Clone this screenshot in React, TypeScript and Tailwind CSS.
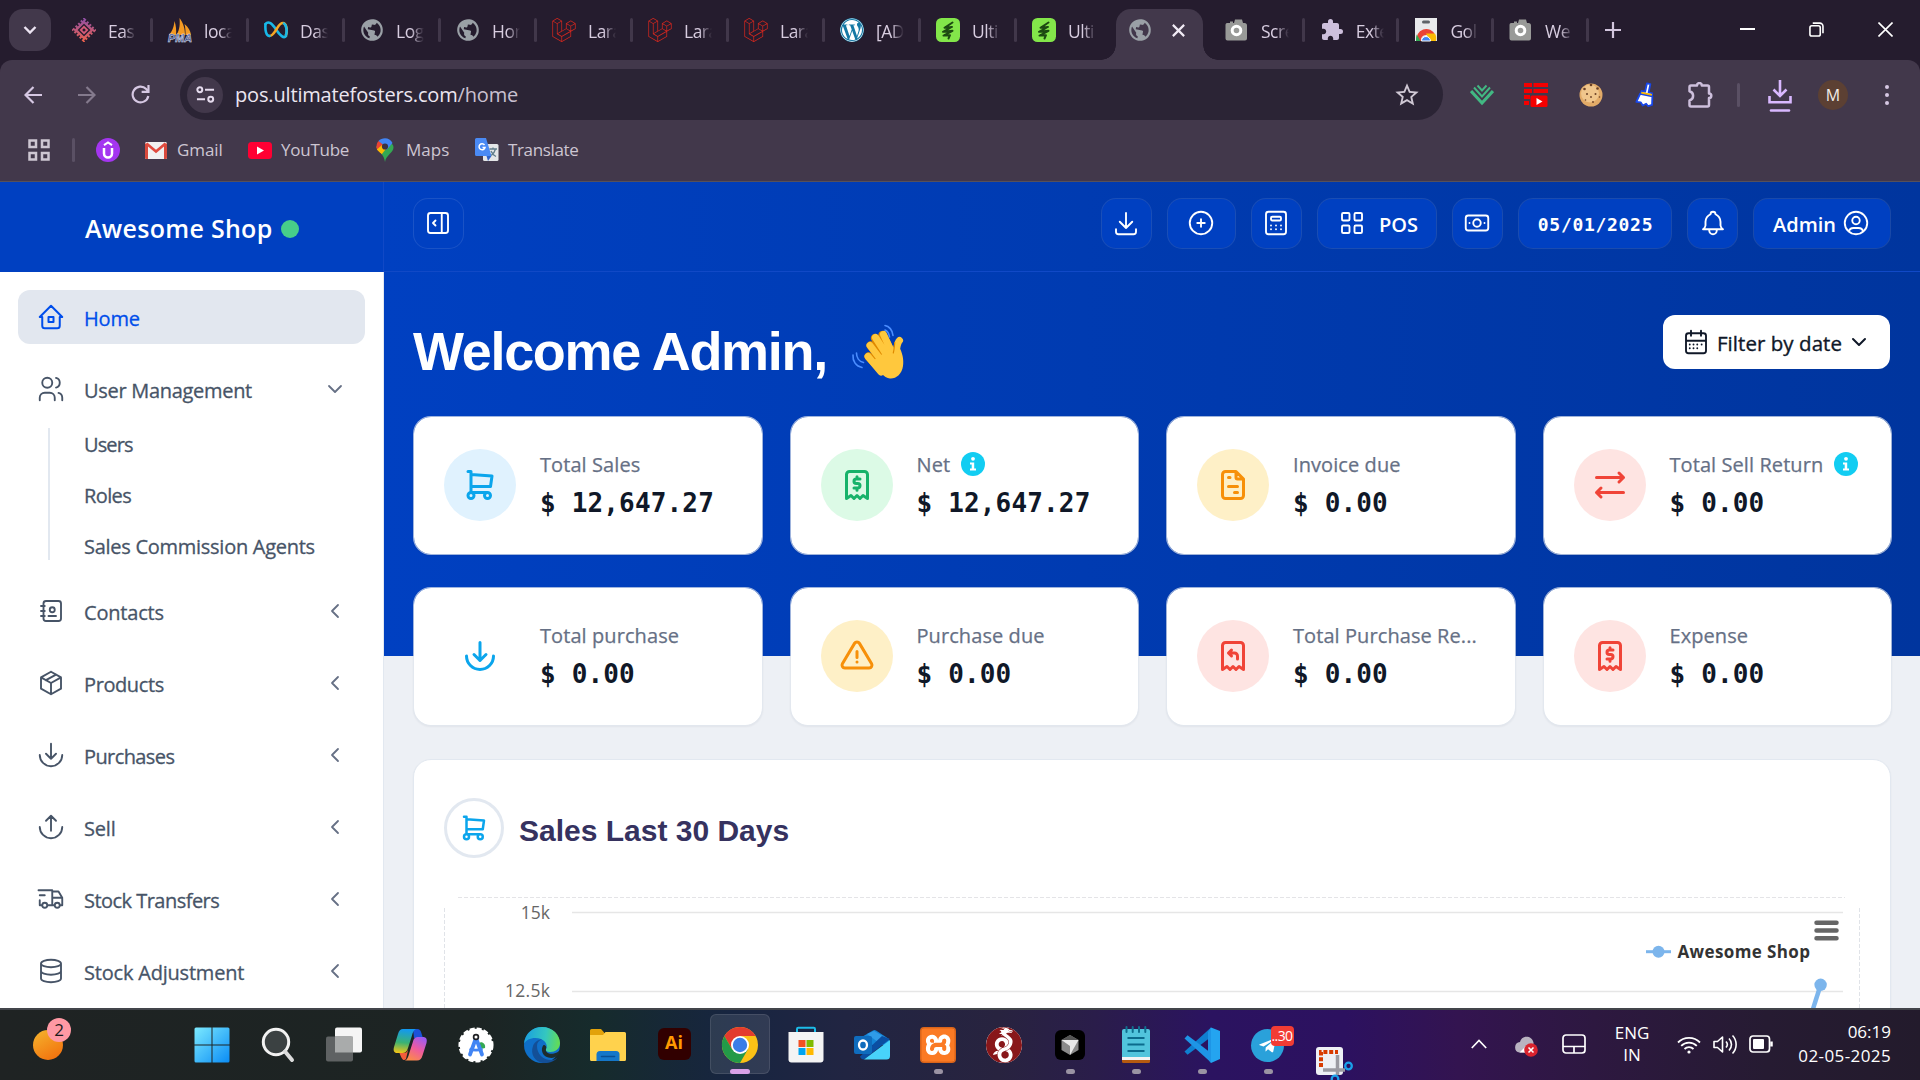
import React from "react";
import { FaLaravel, FaWordpress, FaTelegramPlane } from "react-icons/fa";
import { MdPublic, MdExtension, MdStarOutline } from "react-icons/md";
import { SiXampp, SiWireguard } from "react-icons/si";

const ICONS = {
  home: "M5 12H3l9-9 9 9h-2M5 12v7a2 2 0 0 0 2 2h10a2 2 0 0 0 2-2v-7M10 12h4v4h-4z",
  users:
    "M5 7a4 4 0 1 0 8 0a4 4 0 1 0-8 0M3 21v-2a4 4 0 0 1 4-4h4a4 4 0 0 1 4 4v2M16 3.13a4 4 0 0 1 0 7.75M21 21v-2a4 4 0 0 0-3-3.85",
  contacts:
    "M20 6v12a2 2 0 0 1-2 2H8a2 2 0 0 1-2-2V6a2 2 0 0 1 2-2h10a2 2 0 0 1 2 2zM10 16h6M11 11a2 2 0 1 0 4 0a2 2 0 1 0-4 0M4 8h3M4 12h3M4 16h3",
  box: "M12 3l8 4.5v9L12 21l-8-4.5v-9L12 3M12 12l8-4.5M12 12v9M12 12L4 7.5M16 5.25l-8 4.5",
  purchases: "M12 3v12M16 11l-4 4l-4-4M3 12a9 9 0 0 0 18 0",
  sell: "M12 15V3M16 7l-4-4l-4 4M3 12a9 9 0 0 0 18 0",
  truck:
    "M5 17a2 2 0 1 0 4 0a2 2 0 1 0-4 0M15 17a2 2 0 1 0 4 0a2 2 0 1 0-4 0M5 17H3v-4M2 5h11v12M9 17h6M19 17h2v-6h-8M13 6h5l3 5M3 9h4",
  database:
    "M4 6a8 3 0 1 0 16 0a8 3 0 1 0-16 0M4 6v6a8 3 0 0 0 16 0V6M4 12v6a8 3 0 0 0 16 0v-6",
  chevronLeft: "M15 6l-6 6l6 6",
  chevronDown: "M6 9l6 6l6-6",
  panel: "M4 6a2 2 0 0 1 2-2h12a2 2 0 0 1 2 2v12a2 2 0 0 1-2 2H6a2 2 0 0 1-2-2zM15 4v16M10 10l-2 2l2 2",
  download: "M4 17v2a2 2 0 0 0 2 2h12a2 2 0 0 0 2-2v-2M7 11l5 5l5-5M12 4v12",
  plus: "M3 12a9 9 0 1 0 18 0a9 9 0 0 0-18 0M9 12h6M12 9v6",
  calculator:
    "M4 5a2 2 0 0 1 2-2h12a2 2 0 0 1 2 2v14a2 2 0 0 1-2 2H6a2 2 0 0 1-2-2zM8 8a1 1 0 0 1 1-1h6a1 1 0 0 1 1 1v1a1 1 0 0 1-1 1H9a1 1 0 0 1-1-1zM8 14v.01M12 14v.01M16 14v.01M8 17v.01M12 17v.01M16 17v.01",
  grid: "M4 5a1 1 0 0 1 1-1h4a1 1 0 0 1 1 1v4a1 1 0 0 1-1 1H5a1 1 0 0 1-1-1zM14 5a1 1 0 0 1 1-1h4a1 1 0 0 1 1 1v4a1 1 0 0 1-1 1h-4a1 1 0 0 1-1-1zM4 15a1 1 0 0 1 1-1h4a1 1 0 0 1 1 1v4a1 1 0 0 1-1 1H5a1 1 0 0 1-1-1zM14 15a1 1 0 0 1 1-1h4a1 1 0 0 1 1 1v4a1 1 0 0 1-1 1h-4a1 1 0 0 1-1-1z",
  cash: "M9 12a3 3 0 1 0 6 0a3 3 0 1 0-6 0M3 8a2 2 0 0 1 2-2h14a2 2 0 0 1 2 2v8a2 2 0 0 1-2 2H5a2 2 0 0 1-2-2zM18 12h.01M6 12h.01",
  bell: "M10 5a2 2 0 1 1 4 0a7 7 0 0 1 4 6v3a4 4 0 0 0 2 3H4a4 4 0 0 0 2-3v-3a7 7 0 0 1 4-6M9 17v1a3 3 0 0 0 6 0v-1",
  user: "M3 12a9 9 0 1 0 18 0a9 9 0 1 0-18 0M9 10a3 3 0 1 0 6 0a3 3 0 1 0-6 0M6.17 18.85A4 4 0 0 1 10 16h4a4 4 0 0 1 3.83 2.855",
  calendar:
    "M4 7a2 2 0 0 1 2-2h12a2 2 0 0 1 2 2v12a2 2 0 0 1-2 2H6a2 2 0 0 1-2-2zM16 3v4M8 3v4M4 11h16M7 14h.01M10 14h.01M13 14h.01M16.5 14h.01M13 17h.01M7 17h.01M10 17h.01",
  cart: "M4 19a2 2 0 1 0 4 0a2 2 0 1 0-4 0M15 19a2 2 0 1 0 4 0a2 2 0 1 0-4 0M17 17H6V3H4M6 5l14 1l-1 7H6",
  receipt:
    "M5 21V5a2 2 0 0 1 2-2h10a2 2 0 0 1 2 2v16l-3-2l-2 2l-2-2l-2 2l-2-2l-3 2M14 8h-2.5a1.5 1.5 0 0 0 0 3h1a1.5 1.5 0 0 1 0 3H10M12 14v1.5M12 6.5V8",
  refund:
    "M5 21V5a2 2 0 0 1 2-2h10a2 2 0 0 1 2 2v16l-3-2l-2 2l-2-2l-2 2l-2-2l-3 2M15 14v-2a2 2 0 0 0-2-2H9l2-2M11 12l-2-2",
  invoice:
    "M14 3v4a1 1 0 0 0 1 1h4M17 21H7a2 2 0 0 1-2-2V5a2 2 0 0 1 2-2h7l5 5v11a2 2 0 0 1-2 2zM9 7h1M9 13h6M13 17h2",
  exchange: "M21 7H3M18 10l3-3l-3-3M6 20l-3-3l3-3M3 17h18",
  alert:
    "M12 9v4M10.363 3.591L2.257 17.125a1.914 1.914 0 0 0 1.636 2.871h16.214a1.914 1.914 0 0 0 1.636-2.87L13.637 3.59a1.914 1.914 0 0 0-3.274 0zM12 16h.01",
} as const;
type IconName = keyof typeof ICONS;

function Icon({ name, className, stroke = 1.5 }: { name: IconName; className?: string; stroke?: number }) {
  return (
    <svg viewBox="0 0 24 24" fill="none" stroke="currentColor" strokeWidth={stroke} strokeLinecap="round" strokeLinejoin="round" className={className}>
      <path d={ICONS[name]} />
    </svg>
  );
}

/* ---------- favicons ---------- */

const Globe = () => <MdPublic className="size-[26px] -mx-px rotate-[10deg] text-[#9aa0a6]" />;
const Laravel = () => <FaLaravel className="size-6 text-[#d1271f]" />;
const Camera = () => (
  <svg viewBox="0 0 24 24" className="size-6">
    <path d="M3 5h2V3.500h3V5h1l1-3.500h7L18 5h1.500A2.500 2.500 0 0 1 22 7.500v13a2 2 0 0 1-2 2H2.500a2 2 0 0 1-2-2V7A2 2 0 0 1 3 5z" fill="#999a98" />
    <circle cx="11.500" cy="12.500" r="4.300" fill="none" stroke="#fff" strokeWidth="3" />
  </svg>
);
const Ultimate = () => (
  <svg viewBox="0 0 24 24" className="size-6">
    <rect width="24" height="24" rx="5.500" fill="#83e64a" />
    <path d="M16.500 4.500L8.500 9.800l7.500-.9L7 13.800l9.500-1L7.500 17.600l6.500-.4-1.500 3.300" fill="none" stroke="#1d4a12" strokeWidth="2" strokeLinecap="round" strokeLinejoin="round" />
  </svg>
);
const Easy = () => (
  <svg viewBox="0 0 24 24" className="size-6" fill="none">
    <defs>
      <linearGradient id="easy" gradientUnits="userSpaceOnUse" x1="0" y1="0" x2="0" y2="24">
        <stop offset="0" stopColor="#8f4fa8" />
        <stop offset="1" stopColor="#f0614a" />
      </linearGradient>
    </defs>
    <path d="M12 1.500L22.500 12 12 22.500 1.500 12z" stroke="url(#easy)" strokeWidth="3" strokeDasharray="2 1.700" />
    <path d="M12 4L20 12 12 20 4 12z" stroke="url(#easy)" strokeWidth="2.400" />
    <path d="M12 8.800l3.200 3.200-3.200 3.200L8.800 12z" stroke="#d65a78" strokeWidth="1.800" />
  </svg>
);
const Pma = () => (
  <svg viewBox="0 0 24 24" className="size-6 overflow-visible">
    <path d="M1 17C5 12 6 8 6.500 3 8 8 8.500 12 8 17zM8.500 17C12 11 12 6 11.500 0c4 5 5.500 11 5.500 17zM17.500 17c0-4 0-7-1-11 4 3 6 7 6.500 11z" fill="#f59b23" />
    <text x="0" y="23.500" fontSize="10" fontWeight="800" fontStyle="italic" textLength="24" lengthAdjust="spacingAndGlyphs" fill="#3a4580" stroke="#dfe3f7" strokeWidth=".5" className="font-['Liberation_Sans']">PMA</text>
  </svg>
);
const Loop = () => (
  <svg viewBox="0 0 24 24" className="size-6" fill="none" strokeWidth="2.600" strokeLinecap="round">
    <path d="M1.500 6c3-3.500 6.500-.5 10.500 5.500S20 21 22 18" stroke="#18b8e8" />
    <path d="M22 17c2-5 0-12-3-12-3.500 0-5 4-7 7s-3.500 6-6.500 6" stroke="#f5a623" />
    <path d="M5.500 18C2 18 1 12 1.500 6M22 17c1.300-4 .3-10-2-11.500" stroke="#18b8e8" />
  </svg>
);
const WebStore = () => (
  <svg viewBox="0 0 24 24" className="size-6">
    <path d="M1 0h22v23H1z" fill="#e9eaec" />
    <rect x="8" y="2.500" width="8" height="3" rx="1.500" fill="#5f6368" />
    <path d="M3 23a9.500 9.500 0 0 1 18-6H12a5 5 0 0 0-5 6z" fill="#ea4335" />
    <path d="M2.800 16.500L6.500 23H2c0-2.500 0-4.500.8-6.500z" fill="#34a853" />
    <path d="M12 15.500h9c1.200 2 1.600 5 1 7.500h-6z" fill="#fbbc05" />
    <path d="M7.500 23a4.500 4.500 0 1 1 9 0z" fill="#4285f4" stroke="#fff" />
  </svg>
);

type Tab = { label: string; icon: React.ReactNode; last?: boolean };
const TABS: Tab[] = [
  { label: "Eas", icon: <Easy /> },
  { label: "loca", icon: <Pma /> },
  { label: "Das", icon: <Loop /> },
  { label: "Log", icon: <Globe /> },
  { label: "Hon", icon: <Globe /> },
  { label: "Lara", icon: <Laravel /> },
  { label: "Lara", icon: <Laravel /> },
  { label: "Lara", icon: <Laravel /> },
  { label: "[AD", icon: <FaWordpress className="size-6 rounded-full bg-[#1478a4] text-white" /> },
  { label: "Ulti", icon: <Ultimate /> },
  { label: "Ulti", icon: <Ultimate />, last: true },
];
const TABS_AFTER: Tab[] = [
  { label: "Scre", icon: <Camera /> },
  { label: "Exte", icon: <MdExtension className="size-6 text-[#cdbfdc]" /> },
  { label: "Gol", icon: <WebStore /> },
  { label: "We", icon: <Camera /> },
];

function TabCell({ tab, wide }: { tab: Tab; wide?: boolean }) {
  return (
    <div className={"flex h-full shrink-0 items-center " + (wide ? "w-24" : "w-[94.700px]")}>
      <span className="ml-[15px] flex size-6 shrink-0 items-center justify-center">{tab.icon}</span>
      <span className="ml-3 w-[36px] shrink-0 whitespace-nowrap pt-[3px] text-[17.500px] tracking-[-0.500px] text-[#d8cde0] [mask-image:linear-gradient(to_right,#000_15px,transparent_28px)]">
        {tab.label}
      </span>
      <span className={"ml-auto h-6 w-[3px] rounded-full " + (tab.last ? "bg-transparent" : "bg-[#41374a]")} />
    </div>
  );
}

function TabStrip() {
  return (
    <div className="flex h-[60px] bg-[#251c2e]">
      <div className="ml-[9px] mt-[9px] flex h-[42px] w-[42px] shrink-0 items-center justify-center rounded-[14px] bg-[#42384b]">
        <svg viewBox="0 0 14 10" className="mb-px w-3.5" fill="none" stroke="#ece4f2" strokeWidth="2.400">
          <path d="M1.500 2L7 7.500 12.500 2" />
        </svg>
      </div>
      <div className="flex h-[60px] pl-1.5">
        {TABS.map((t, i) => (
          <TabCell key={i} tab={t} wide />
        ))}
      </div>
      <div className="relative ml-[3px] mt-[9px] flex h-[51px] w-[87px] shrink-0 items-center rounded-t-[15px] bg-[#42384b] pb-[9px]">
        <span className="absolute bottom-0 -left-[15px] size-[15px] bg-[radial-gradient(circle_at_0_0,transparent_14.500px,#42384b_15px)]" />
        <span className="absolute bottom-0 -right-[15px] size-[15px] bg-[radial-gradient(circle_at_100%_0,transparent_14.500px,#42384b_15px)]" />
        <span className="ml-3"><Globe /></span>
        <svg viewBox="0 0 12 12" className="ml-5 w-[13px]" stroke="#f1ebf5" strokeWidth="2">
          <path d="M.8.800l10.400 10.400M11.200.800L.8 11.200" />
        </svg>
      </div>
      <div className="ml-[7px] flex h-[60px]">
        {TABS_AFTER.map((t, i) => (
          <TabCell key={i} tab={t} />
        ))}
      </div>
      <svg viewBox="0 0 16 16" className="ml-4 mt-[22px] size-4" stroke="#d3c6de" strokeWidth="2.200">
        <path d="M8 0v16M0 8h16" />
      </svg>
      <div className="ml-auto mr-[27px] flex items-center gap-[54px] pb-0.5 text-white">
        <span className="h-0.5 w-[15px] bg-white" />
        <svg viewBox="0 0 16 16" className="w-[15px]" fill="none" stroke="currentColor" strokeWidth="1.700">
          <rect x="1" y="4" width="11" height="11" rx="2" />
          <path d="M4 1.200h7.500A3.300 3.300 0 0 1 14.900 4.500V12" />
        </svg>
        <svg viewBox="0 0 16 16" className="w-[15px]" stroke="currentColor" strokeWidth="1.700">
          <path d="M.5.500l15 15M15.500.500l-15 15" />
        </svg>
      </div>
    </div>
  );
}

function Toolbar() {
  return (
    <div className="bg-[#251c2e]">
      <div className="flex h-[69px] items-start rounded-t-[12px] bg-[#42384b] pt-[9px]">
        <div className="flex h-[51px] items-center pl-6 text-[#d6c8e3]">
          <svg viewBox="0 0 18 18" className="w-[18px]" fill="none" stroke="currentColor" strokeWidth="2.200">
            <path d="M18 9H1.500M9.500 1L1.500 9l8 8" />
          </svg>
          <svg viewBox="0 0 18 18" className="ml-9 w-[18px] text-[#847a8d]" fill="none" stroke="currentColor" strokeWidth="2.200">
            <path d="M0 9h16.500M8.500 1l8 8-8 8" />
          </svg>
          <svg viewBox="0 0 20 20" className="ml-[35px] w-[19px]" fill="none" stroke="currentColor" strokeWidth="2.300">
            <path d="M18.200 11.500A8.300 8.300 0 1 1 16 4.200L18 6.500" />
            <path d="M18.400 0v7.200h-7.200" />
          </svg>
        </div>
        <div className="ml-[30px] flex h-[51px] w-[1263px] items-center rounded-full bg-[#2b2435] pl-[7px]">
          <span className="flex size-9 items-center justify-center rounded-full bg-[#42384b]">
            <svg viewBox="0 0 20 18" className="w-[19px]" fill="none" stroke="#e6dcee" strokeWidth="2.100">
              <circle cx="4" cy="4" r="2.600" />
              <path d="M9.500 4H19M1 14h8.500" />
              <circle cx="15.500" cy="14" r="2.600" />
            </svg>
          </span>
          <span className="ml-3 text-[20px] tracking-[-0.160px] text-[#ece6f0]">
            pos.ultimatefosters.com<span className="text-[#c9c0d0]">/home</span>
          </span>
          <MdStarOutline className="ml-auto mr-[22px] size-7 text-[#cfc8d4]" />
        </div>
        <div className="flex h-[51px] flex-1 items-center pl-[27px]">
          <svg viewBox="0 0 24 22" className="w-6" fill="none" stroke="#42b883" strokeWidth="2.500">
            <path d="M1 7l11 12L23 7" strokeWidth="3.200" />
            <path d="M4 3.500l8 9 8-9M7.500 1.500L12 6.500l4.500-5" strokeWidth="1.900" />
          </svg>
          <svg viewBox="0 0 24 24" className="ml-[30px] w-6">
            <path d="M0 0h8v4H0zM9.500 0H24v4H9.500zM0 6h8v4H0zM9.500 6H24v4H9.500zM0 12h6v4H0zM0 18h5v4H0z" fill="#f40000" />
            <rect x="6.500" y="12.500" width="17" height="11.500" rx="1.500" fill="#f40000" />
            <path d="M12.500 15l6 3.500-6 3.500z" fill="#fff" />
          </svg>
          <svg viewBox="0 0 24 24" className="ml-[31px] w-6">
            <circle cx="12" cy="12" r="11.500" fill="#e2ab68" />
            <circle cx="11" cy="10.500" r="9" fill="#f0c68c" />
            <g fill="#6b4026">
              <circle cx="12" cy="2" r="1.300" /><circle cx="5.500" cy="6" r="1.300" /><circle cx="18.500" cy="5.500" r="1.300" />
              <circle cx="8" cy="11" r="1" /><circle cx="16.500" cy="11" r="1" /><circle cx="12" cy="14" r=".9" />
              <circle cx="6.500" cy="17" r=".8" /><circle cx="14" cy="19" r=".9" /><circle cx="20.500" cy="14" r=".8" />
            </g>
          </svg>
          <svg viewBox="0 0 24 26" className="ml-[31px] w-6" strokeLinejoin="round">
            <g transform="rotate(12 12 13)">
              <path d="M10.500 1.500h3.500V10h3.800v3H6.800v-3h3.700z" fill="#fff" stroke="#1746e8" strokeWidth="1.800" />
              <path d="M6 13h12.500l1.500 8.500-3.500 2-2.500-2-3 2.500-2.500-2.700-4.500.5z" fill="#fff" stroke="#1746e8" strokeWidth="1.800" />
              <path d="M6.800 11.600h11" stroke="#f7b500" strokeWidth="1.800" />
            </g>
          </svg>
          <svg viewBox="0 0 25 26" className="ml-[30px] w-[25px]" fill="none" stroke="#cdbfdc" strokeWidth="2.500" strokeLinejoin="round">
            <path d="M1.500 5a1.500 1.500 0 0 1 1.500-1.500h6a2.400 2.400 0 0 1 4.800 0h5.700A1.500 1.500 0 0 1 21 5v6.500a2.300 2.300 0 0 1 0 4.600V23a1.500 1.500 0 0 1-1.500 1.500H3A1.500 1.500 0 0 1 1.500 23v-4.500a4.800 4.800 0 0 0 0-9.300z" />
          </svg>
          <span className="ml-6 h-6 w-[3px] rounded-full bg-[#5a5064]" />
          <svg viewBox="0 0 24 33" className="ml-[28px] mt-1 w-6" fill="none" stroke="#d9b8ff" strokeWidth="2.600">
            <path d="M12 0v15M5.500 9.500L12 16l6.500-6.500M1.500 16v6.200h21V16" />
            <path d="M3 30.500h18" strokeLinecap="round" />
          </svg>
          <span className="ml-[26px] flex size-[30px] items-center justify-center rounded-full bg-[#5c4033] text-[16px] text-[#f3ece8]">M</span>
          <span className="ml-[37px] flex flex-col gap-1">
            <i className="size-1 rounded-full bg-[#d6c8e3]" />
            <i className="size-1 rounded-full bg-[#d6c8e3]" />
            <i className="size-1 rounded-full bg-[#d6c8e3]" />
          </span>
        </div>
      </div>
      <div className="flex h-[53px] items-center border-b border-[#56505a] bg-[#42384b] pb-[10px] pl-7 text-[17px] text-[#cdc6d2]">
        <svg viewBox="0 0 22 22" className="size-[22px]" fill="none" stroke="#cdc6d2" strokeWidth="2.500">
          <path d="M1.500 1.500h6.500v6.500H1.500zM14 1.500h6.500v6.500H14zM1.500 14h6.500v6.500H1.500zM14 14h6.500v6.500H14z" />
        </svg>
        <span className="ml-[22px] h-6 w-[3px] rounded-full bg-[#5a5064]" />
        <svg viewBox="0 0 24 24" className="ml-[21px] size-6">
          <circle cx="12" cy="12" r="12" fill="#a435f0" />
          <path d="M8 10v5.500a4 4 0 0 0 8 0V10" fill="none" stroke="#fff" strokeWidth="2.500" />
          <path d="M8 7.200L12 4.500l4 2.700" fill="none" stroke="#fff" strokeWidth="2" />
        </svg>
        <svg viewBox="0 0 22 17" className="ml-[25px] w-[22px]">
          <rect width="22" height="17" rx="1.500" fill="#f1f1f1" />
          <path d="M0 1.500h3V17H1.500A1.500 1.500 0 0 1 0 15.500zM19 1.500h3v14a1.500 1.500 0 0 1-1.500 1.500H19z" fill="#d94a3d" />
          <path d="M1.500 1.500L11 9.500l9.500-8" fill="none" stroke="#e04b3f" strokeWidth="2.600" />
        </svg>
        <span className="ml-[10px] w-[71px] tracking-[-0.100px]">Gmail</span>
        <svg viewBox="0 0 24 17" className="w-6">
          <rect width="24" height="17" rx="3.500" fill="#ff0033" />
          <path d="M9 4.500l7 4-7 4z" fill="#fff" />
        </svg>
        <span className="ml-[9px] w-[95px] tracking-[-0.250px]">YouTube</span>
        <svg viewBox="0 0 18 24" className="w-[18px]">
          <path d="M9 24c-.6-4-1.500-5.500-3.500-8L14 5c2 .5 3.500 2 3.500 4.500C17.500 14.500 10 17 9 24z" fill="#34a853" />
          <path d="M5.800 16.300C2.500 13 .5 11.500.5 8.500L5 7l6 2.500z" fill="#fbbc04" />
          <path d="M.5 9c0-3.500 1-4.800 2.500-6.200L9 8l-5.500 6C2 12.500.5 11 .5 9z" fill="#ea4335" />
          <path d="M2.500 3C6 -1 14-1 16.500 5L10.500 12 7.500 7z" fill="#4285f4" />
          <path d="M.8 11.500L4.500 15l6-6-4.500-2z" fill="#fbbc04" />
          <circle cx="9" cy="8.500" r="3.100" fill="#3b3244" />
        </svg>
        <span className="ml-[12px] w-[69px]">Maps</span>
        <svg viewBox="0 0 24 24" className="w-6">
          <rect x="8" y="6" width="15.500" height="17" rx="1.500" fill="#e4e6e8" />
          <path d="M0 1.500A1.500 1.500 0 0 1 1.500 0H11l5.500 18H1.500A1.500 1.500 0 0 1 0 16.500z" fill="#4a8af4" />
          <path d="M11.500 18h5L13 23z" fill="#2f62c9" />
          <path d="M9.500 7A3 3 0 1 0 10 9.500H7.500" fill="none" stroke="#fff" strokeWidth="1.500" />
          <path d="M14.500 11H22M18 9.500V11M20.500 11c-.7 3-2.500 5-4.300 6.500M16 13c1 2.500 3 4.500 5 5.500" fill="none" stroke="#607d8b" strokeWidth="1.300" />
        </svg>
        <span className="ml-[9px] tracking-[-0.350px]">Translate</span>
      </div>
    </div>
  );
}

/* ---------- sidebar ---------- */

type NavItem = { label: string; icon: IconName; track: string };
const NAV: NavItem[] = [
  { label: "Contacts", icon: "contacts", track: "tracking-[-0.200px]" },
  { label: "Products", icon: "box", track: "tracking-[-0.400px]" },
  { label: "Purchases", icon: "purchases", track: "tracking-[-0.600px]" },
  { label: "Sell", icon: "sell", track: "tracking-[-0.200px]" },
  { label: "Stock Transfers", icon: "truck", track: "tracking-[-0.530px]" },
  { label: "Stock Adjustment", icon: "database", track: "tracking-[-0.200px]" },
];

function NavRow({ label, icon, track, open }: NavItem & { open?: boolean }) {
  return (
    <div className="flex h-[54px] items-center pl-[18px] text-[#475467]">
      <Icon name={icon} className="size-[30px]" />
      <span className={"ml-[18px] pt-[3px] text-[20px] [-webkit-text-stroke:0.3px] " + track}>{label}</span>
      <Icon name={open ? "chevronDown" : "chevronLeft"} className="ml-auto mr-[18px] size-6 text-[#667085]" stroke={1.800} />
    </div>
  );
}

function Sidebar() {
  return (
    <aside className="flex w-96 shrink-0 flex-col overflow-hidden">
      <div className="flex h-[90px] shrink-0 items-center gap-2 border-r border-[#1149c6] bg-[#0040c1] pl-[85px] pt-[3px]">
        <span className="text-[25px] font-semibold tracking-[0.300px] text-white">Awesome Shop</span>
        <span className="mt-px size-[18px] rounded-full bg-[#47cd89]" />
      </div>
      <nav className="flex-1 border-r border-[#e2e8f0] bg-white px-[18px] pt-[18px]">
        <div className="flex h-[54px] items-center rounded-[12px] bg-[#e2e7ef] pl-[18px] text-[#004eeb]">
          <Icon name="home" className="size-[30px]" stroke={1.600} />
          <span className="ml-[18px] pt-[3px] text-[20px] tracking-[-0.200px] [-webkit-text-stroke:0.3px]">Home</span>
        </div>
        <div className="mt-[18px]">
          <NavRow label="User Management" icon="users" track="tracking-[-0.300px]" open />
        </div>
        <div className="ml-[30px] mt-3 flex h-[132px] flex-col border-l-2 border-[#e2e8f0] pl-[34px] pt-[2px] text-[20px] leading-[30px] text-[#475467] [-webkit-text-stroke:0.3px]">
          <span className="tracking-[-0.900px]">Users</span>
          <span className="mt-[21px] tracking-[-0.600px]">Roles</span>
          <span className="mt-[21px] tracking-[-0.270px]">Sales Commission Agents</span>
        </div>
        <div className="mt-6 flex flex-col gap-[18px]">
          {NAV.map((n) => (
            <NavRow key={n.label} {...n} />
          ))}
        </div>
      </nav>
    </aside>
  );
}

/* ---------- dashboard ---------- */

const BTN = "flex h-[51px] items-center justify-center rounded-[15px] border border-white/10 bg-[#0040c1] bg-clip-padding pb-px ";

function Header() {
  return (
    <header className="flex h-[90px] shrink-0 items-start border-b border-[#1149c6] pl-[29px] pr-[29px] pt-4 text-white">
      <div className={BTN + "w-[51px] pr-px"}><Icon name="panel" className="size-[30px]" /></div>
      <div className="ml-auto flex gap-[15px]">
        <div className={BTN + "w-[51px] pr-px"}><Icon name="download" className="size-[30px]" /></div>
        <div className={BTN + "w-[69px] pr-px"}><Icon name="plus" className="size-[30px]" /></div>
        <div className={BTN + "w-[51px] pr-px"}><Icon name="calculator" className="size-[30px]" /></div>
        <div className={BTN + "w-[120px] gap-3 pl-px text-[20px] font-semibold"}>
          <Icon name="grid" className="size-[30px]" />
          <span className="pt-1">POS</span>
        </div>
        <div className={BTN + "w-[51px] pr-px"}><Icon name="cash" className="size-[30px]" /></div>
        <div className={BTN + "w-[154px] pl-px pt-[3px] font-['DejaVu_Sans_Mono',monospace] text-[18px] font-bold tracking-[0.700px]"}>05/01/2025</div>
        <div className={BTN + "w-[51px]"}><Icon name="bell" className="size-[30px]" /></div>
        <div className={BTN + "w-[138px] gap-[5px] text-[20px] font-semibold"}>
          <span className="pt-1">Admin</span>
          <Icon name="user" className="size-[30px]" />
        </div>
      </div>
    </header>
  );
}

function InfoDot() {
  return (
    <svg viewBox="0 0 24 24" className="-mt-[3px] size-6 shrink-0">
      <circle cx="12" cy="12" r="12" fill="#12cdf2" />
      <circle cx="12" cy="6.800" r="1.900" fill="#fff" />
      <path d="M9 10.500h4.200v6H15v2H9v-2h1.700v-4H9z" fill="#fff" />
    </svg>
  );
}

type Stat = { label: string; value: string; icon: IconName; tone: string; info?: boolean };
const STATS: Stat[] = [
  { label: "Total Sales", value: "$ 12,647.27", icon: "cart", tone: "bg-[#e0f2fe] text-[#0ba5ec]" },
  { label: "Net", value: "$ 12,647.27", icon: "receipt", tone: "bg-[#dcfae6] text-[#17b26a]", info: true },
  { label: "Invoice due", value: "$ 0.00", icon: "invoice", tone: "bg-[#fef0c7] text-[#f79009]" },
  { label: "Total Sell Return", value: "$ 0.00", icon: "exchange", tone: "bg-[#fee4e2] text-[#f04438]", info: true },
  { label: "Total purchase", value: "$ 0.00", icon: "purchases", tone: "text-[#0ba5ec]" },
  { label: "Purchase due", value: "$ 0.00", icon: "alert", tone: "bg-[#fef0c7] text-[#f79009]" },
  { label: "Total Purchase Re...", value: "$ 0.00", icon: "refund", tone: "bg-[#fee4e2] text-[#f04438]" },
  { label: "Expense", value: "$ 0.00", icon: "receipt", tone: "bg-[#fee4e2] text-[#f04438]" },
];

function StatCard({ s }: { s: Stat }) {
  return (
    <div className="flex h-[138.500px] items-center rounded-[18px] border border-[#e2e8f0]/70 bg-white bg-clip-padding pl-[30px] shadow-[0_1px_2px_rgba(16,24,40,0.05)]">
      <div className={"flex size-[72px] shrink-0 items-center justify-center rounded-full " + s.tone}>
        <Icon name={s.icon} className="size-9" stroke={2} />
      </div>
      <div className="ml-6 flex flex-col pt-px">
        <span className="flex h-[30px] items-center gap-[11px] whitespace-nowrap text-[20px] tracking-[0.080px] text-[#667085] [-webkit-text-stroke:0.25px]">
          {s.label}
          {s.info && <InfoDot />}
        </span>
        <span className="mt-[5px] whitespace-pre font-['DejaVu_Sans_Mono',monospace] text-[26px] font-bold leading-9 tracking-[0.160px] text-[#101828]">
          {s.value}
        </span>
      </div>
    </div>
  );
}

function ChartCard() {
  return (
    <section className="mr-px mt-[33.500px] h-[300px] shrink-0 rounded-[18px] border border-[#e2e8f0] bg-white pl-[30px] shadow-[0_1px_2px_rgba(16,24,40,0.05)]">
      <div className="flex items-center gap-[15px] pt-[38px]">
        <div className="flex size-[60px] items-center justify-center rounded-full border-[3px] border-[#e2e8f0] text-[#0ba5ec]">
          <Icon name="cart" className="size-[30px]" stroke={2} />
        </div>
        <h2 className="pt-1 font-['Liberation_Sans',Arial,sans-serif] text-[30px] font-bold text-[#36325f]">Sales Last 30 Days</h2>
      </div>
      <svg viewBox="444 858 1446 150" width="1446" height="150" className="overflow-hidden">
        <path d="M458 897.500H1845" stroke="#e4e4e7" strokeDasharray="4 2" />
        <path d="M444.500 908V1008M1859.500 908V1008" stroke="#e0e3e8" strokeDasharray="4 2" />
        <path d="M572 912.500H1843M572 991.500H1843" stroke="#e6e6e6" strokeWidth="1.500" />
        <g className="font-['Open_Sans',sans-serif] text-[17.500px]" fill="#666" textAnchor="end">
          <text x="550" y="919">15k</text>
          <text x="550" y="997" textLength="45">12.5k</text>
        </g>
        <path d="M1646 951.700h25" stroke="#7cb5ec" strokeWidth="3" />
        <circle cx="1658.500" cy="951.700" r="6" fill="#7cb5ec" />
        <text x="1677.500" y="957.500" textLength="132.500" fill="#333" className="font-['Open_Sans',sans-serif] text-[17px] font-bold">Awesome Shop</text>
        <path d="M1816.500 922.800h20M1816.500 930.500h20M1816.500 938.200h20" stroke="#666" strokeWidth="4.500" strokeLinecap="round" />
        <path d="M1820.600 985L1812 1012" stroke="#7cb5ec" strokeWidth="4.500" />
        <circle cx="1820.600" cy="984.800" r="6.200" fill="#7cb5ec" />
      </svg>
    </section>
  );
}

function Dashboard() {
  return (
    <main className="flex min-w-0 flex-1 flex-col overflow-hidden bg-[#edf0f5] bg-[linear-gradient(to_right,#0040c1,#00359e)] bg-[length:100%_474px] bg-no-repeat">
      <Header />
      <div className="flex flex-1 flex-col pl-[29px] pr-[28px] pt-[43px]">
        <div className="flex h-[54px] shrink-0 items-center">
          <h1 className="mt-[18px] whitespace-nowrap font-['Liberation_Sans',Arial,sans-serif] text-[54px] font-bold tracking-[-1.300px] text-white">Welcome Admin,</h1>
          <svg viewBox="0 0 58 58" className="ml-[23px] mt-[18px] size-[58px] shrink-0" fill="none" strokeLinecap="round" strokeLinejoin="round">
            <path d="M35 3.500c4 .5 7.500 4.500 8 10M35 8c2.500 1 4 3.500 4.500 7M3 33c-.5 6 3 11.500 9 12.500M6.500 31c0 4.500 2.500 8.500 7 9.500" stroke="#4b8dff" strokeWidth="1.600" />
            <path d="M18.500 34.500L32 49M20.500 23.500L35 42M25 16L38 36M32.500 13L43 34" stroke="#e08a00" strokeWidth="8.400" />
            <path d="M18 34.500L31 50M20 23.500L34 42M25.500 15.500L38 35M33.500 12.500L43 33" stroke="#ffc83d" strokeWidth="7" />
            <path d="M49.500 18.500C46 22 47.500 30 44 34" stroke="#ffc83d" strokeWidth="7" />
            <path d="M24 38L38 28l10.500-4c4 6 5.500 14 4.500 20-1 8-7 13-13 12.500C34 56 28 49 24 38z" fill="#ffc83d" />
            <path d="M44.800 20.500c-.5 4-.6 7-1.500 10.500" stroke="#e08a00" strokeWidth="1.200" />
          </svg>
          <div className="ml-auto mr-0.5 flex h-[54px] w-[227px] items-center justify-center rounded-[12px] bg-white pr-px text-[#101828]">
            <Icon name="calendar" className="size-[30px]" />
            <span className="ml-1.5 pt-[3px] text-[20.500px] tracking-[0.050px] [-webkit-text-stroke:0.35px]">Filter by date</span>
            <Icon name="chevronDown" className="ml-[5px] size-6" stroke={2} />
          </div>
        </div>
        <div className="mt-[47px] grid shrink-0 grid-cols-4 gap-x-[27px] gap-y-[32.500px]">
          {STATS.map((s) => (
            <StatCard key={s.label} s={s} />
          ))}
        </div>
        <ChartCard />
      </div>
    </main>
  );
}

/* ---------- taskbar ---------- */

const svg48 = "size-12 overflow-visible";
const Windows = () => (
  <svg viewBox="0 0 48 48" className={svg48}>
    <defs>
      <linearGradient id="win" x1="0" y1="0" x2="1" y2="1"><stop offset="0" stopColor="#7ceaff" /><stop offset="1" stopColor="#0a8cf5" /></linearGradient>
    </defs>
    <path d="M6.500 8a1.500 1.500 0 0 1 1.500-1.500h15.500v17h-17zM24.500 6.500H40A1.500 1.500 0 0 1 41.500 8v15.500h-17zM6.500 24.500h17v17H8A1.500 1.500 0 0 1 6.500 40zM24.500 24.500h17V40a1.500 1.500 0 0 1-1.500 1.500H24.500z" fill="url(#win)" />
  </svg>
);
const Search = () => (
  <svg viewBox="0 0 48 48" className={svg48} fill="none">
    <circle cx="22" cy="21" r="12.700" stroke="#f2f2f2" strokeWidth="3" fill="#3b4142" />
    <path d="M31 30.500l7 8.500" stroke="#dcdcdc" strokeWidth="4" strokeLinecap="round" />
  </svg>
);
const TaskView = () => (
  <svg viewBox="0 0 48 48" className={svg48}>
    <rect x="15" y="6.500" width="27" height="25" rx="2" fill="#f5f5f5" />
    <rect x="6" y="15.500" width="27" height="25" rx="2" fill="#5f6263" />
    <path d="M15 15.500h18v16H15z" fill="#a9abab" />
  </svg>
);
const Copilot = () => (
  <svg viewBox="0 0 48 48" className={svg48}>
    <defs>
      <linearGradient id="cpa" x1=".3" y1="0" x2=".2" y2="1"><stop offset="0" stopColor="#1399ef" /><stop offset=".55" stopColor="#3bb273" /><stop offset="1" stopColor="#f6c515" /></linearGradient>
      <linearGradient id="cpb" x1=".8" y1="0" x2=".3" y2="1"><stop offset="0" stopColor="#9a5cf5" /><stop offset=".5" stopColor="#ee5aa0" /><stop offset="1" stopColor="#fb8a4a" /></linearGradient>
    </defs>
    <path d="M27 8h4.500c2 0 3 1.500 3.700 3.500L37 17h-9z" fill="#1b52d8" />
    <path d="M17 8h13c-2.500 1-3.300 4-4 6.500L22 27c-1 3.500-2.500 5-5.500 5H11c-3 0-4-2.500-3-6l4-13c1-3.500 2.500-5 5-5z" fill="url(#cpa)" />
    <path d="M31 39.500H19c2.500-1 3.300-4 4-6.500L27 20.500c1-3.500 2.500-4.500 5.500-4.500H37c3 0 4.500 2 3.500 6l-4 12.500c-1 3.500-2.500 5-5.500 5z" fill="url(#cpb)" />
    <path d="M13.500 32h4c2.500 0 3.800-1 4.700-3.500L20 38c-3 3-4.500-1-6.500-6z" fill="#f25c3b" />
  </svg>
);
const Studio = () => (
  <svg viewBox="0 0 48 48" className={svg48}>
    <circle cx="24" cy="24" r="16.300" fill="#fff" stroke="#fff" strokeWidth="2.500" strokeDasharray="5 2" />
    <path d="M27 22c3-2 7 1 6 5l-4 1z" fill="#34a853" />
    <path d="M24 17l-6 16.500M24 17l6 16.500" stroke="#4285f4" strokeWidth="3.800" fill="none" strokeLinecap="round" />
    <path d="M17.500 28c4 1.500 9 1.500 13 0" stroke="#4285f4" strokeWidth="2.800" fill="none" />
    <circle cx="24" cy="16" r="2.400" fill="#fff" stroke="#202124" strokeWidth="1.700" />
  </svg>
);
const Edge = () => (
  <svg viewBox="0 0 48 48" className={svg48}>
    <defs>
      <linearGradient id="edg" x1="0" y1=".3" x2="1" y2=".4"><stop offset="0" stopColor="#1a9fe0" /><stop offset=".6" stopColor="#34c7c0" /><stop offset="1" stopColor="#63dc55" /></linearGradient>
    </defs>
    <circle cx="24" cy="24" r="18" fill="#0f6fc9" />
    <path d="M6 23C7 12 15 6 24 6c11 0 18 8 18 16 0 6-5 9-9.500 9-4 0-5.500-1.500-4.500-3 2-3 0-8-5-10-7-2.500-15 0-17 5z" fill="url(#edg)" />
    <path d="M19 25c0 8 6 14 14 14 3 0 5-1 6.500-2.500C37 40 31 42.500 25 42c-8-1-13-9-10-17 1.500-4 5-6.500 9-6.500-3.500 1-5 3.500-5 6.500z" fill="#134f97" />
    <path d="M28 28c-1 3 3 5.500 7 4.700 2.300-.3 4.500-1.200 6-2.700 1.500 3-3 7-7.500 7C24 37 22 28 25.500 24c2 0 3.500 2 2.500 4z" fill="#1e2c2c" />
  </svg>
);
const Explorer = () => (
  <svg viewBox="0 0 48 48" className={svg48}>
    <path d="M6 9.500A1.500 1.500 0 0 1 7.500 8H17l4 4.500h15V20H6z" fill="#e2a20b" />
    <path d="M6 14h13l2.500-3H40.500A1.500 1.500 0 0 1 42 12.500V38.500A1.500 1.500 0 0 1 40.500 40h-33A1.500 1.500 0 0 1 6 38.500z" fill="#ffd24d" />
    <path d="M12.500 40v-6.500A3.500 3.500 0 0 1 16 30h16a3.500 3.500 0 0 1 3.500 3.500V40z" fill="#1577c9" />
    <path d="M17.500 35.500h13" stroke="#0a4f93" strokeWidth="1.600" strokeLinecap="round" />
  </svg>
);
const Illustrator = () => (
  <span className="mb-[3px] flex h-[32px] w-[33px] items-center justify-center rounded-[6px] bg-[#310000] pb-0.5 text-[18px] font-bold text-[#ff9a00]">Ai</span>
);
const Chrome = () => (
  <svg viewBox="0 0 48 48" className={svg48}>
    <circle cx="24" cy="24" r="18" fill="#fbc116" />
    <path d="M24 15h15.600A18 18 0 0 0 8.400 15L16.200 28.500z" fill="#e33b2e" />
    <path d="M8.400 15A18 18 0 0 0 24 42l7.800-13.500H24L16.200 28.500z" fill="#239a48" />
    <circle cx="24" cy="24" r="9" fill="#fff" />
    <circle cx="24" cy="24" r="7.200" fill="#3a7de8" />
  </svg>
);
const Store = () => (
  <svg viewBox="0 0 48 48" className={svg48}>
    <path d="M15 12V8a1.300 1.300 0 0 1 1.300-1.300h15.400A1.300 1.300 0 0 1 33 8v4" fill="none" stroke="#1cbce8" strokeWidth="2" />
    <path d="M6.500 11h35v27.500a3 3 0 0 1-3 3h-29a3 3 0 0 1-3-3z" fill="#f4f4f4" />
    <path d="M16.500 19h7v7h-7z" fill="#f25022" /><path d="M24.500 19h7v7h-7z" fill="#7fba00" />
    <path d="M16.500 27h7v7h-7z" fill="#00a4ef" /><path d="M24.500 27h7v7h-7z" fill="#ffb900" />
  </svg>
);
const Outlook = () => (
  <svg viewBox="0 0 48 48" className={svg48}>
    <path d="M12 17L25 9.500a3 3 0 0 1 3 0L41 18v6H12z" fill="#1484d6" />
    <path d="M19 13l7-3 14 8-6 6z" fill="#2f9be8" />
    <path d="M42 18L16 38.500c-2 0-3.500-1-4-3L34 15z" fill="#0b4ea2" />
    <path d="M42 19v16a3.500 3.500 0 0 1-3.500 3.500H16z" fill="#48d3fb" />
    <rect x="6" y="15" width="18" height="18" rx="2" fill="#0f6cbd" />
    <ellipse cx="15" cy="24" rx="4" ry="4.500" fill="none" stroke="#fff" strokeWidth="2.300" />
  </svg>
);
const Xampp = () => (
  <span className="flex size-9 items-center justify-center rounded-[4px] border-2 border-[#d9641a] bg-white">
    <SiXampp className="size-8 shrink-0 scale-[1.05] text-[#fb7a24]" />
  </span>
);
const Wireguard = () => <SiWireguard className="size-9 rounded-full bg-white text-[#88171a]" />;
const Cursor = () => (
  <svg viewBox="0 0 48 48" className={svg48}>
    <rect x="9" y="9" width="30" height="30" rx="6" fill="#000" />
    <path d="M24 14l8.500 5v10L24 34l-8.500-5V19z" fill="#8a8a8a" />
    <path d="M15.500 19h17L24 34v-9z" fill="#e9e9e9" /><path d="M24 14l8.500 5h-17z" fill="#555" />
  </svg>
);
const Notepad = () => (
  <svg viewBox="0 0 48 48" className={svg48}>
    <path d="M10 36h28v4.500a1.500 1.500 0 0 1-1.500 1.500h-25a1.500 1.500 0 0 1-1.500-1.500z" fill="#b45a10" />
    <path d="M10 34h28v5H10z" fill="#f3f3f3" />
    <path d="M10 10a2 2 0 0 1 2-2h24a2 2 0 0 1 2 2v26H10z" fill="#51c4dc" />
    <path d="M14.500 6v5M20.700 6v5M27 6v5M33.300 6v5" stroke="#0f6f8f" strokeWidth="2" strokeLinecap="round" />
    <path d="M15.500 17h17M15.500 23.500h17M15.500 30h17" stroke="#0b6b8c" strokeWidth="2" />
  </svg>
);
const VsCode = () => (
  <svg viewBox="0 0 48 48" className={svg48}>
    <path d="M33 6.500L42 10v28l-9 4-3-4V11z" fill="#24a4f0" />
    <path d="M33 6.500L6.500 30.500l3 3.200L33 16z" fill="#0f7fd0" />
    <path d="M33 41.500L6.500 17.500l3-3.200L33 32z" fill="#1e95e6" />
    <path d="M33 6.500v35L30 38V11z" fill="#1e95e6" />
  </svg>
);
const Telegram = () => (
  <span className="relative -left-px flex size-[33px] items-center justify-center rounded-full bg-[#2aa1da]">
    <FaTelegramPlane className="size-[19px] text-white" />
    <span className="absolute -top-[3px] left-[20px] flex h-5 w-[23px] items-center justify-center rounded-[4px] bg-[#f23c34] text-[14px] leading-none tracking-[-0.600px] text-white">..30</span>
  </span>
);
const Snip = () => (
  <svg viewBox="0 0 48 48" className={svg48 + " translate-y-[15px]"}>
    <rect x="6" y="11" width="27" height="28" rx="3" fill="#eef0f5" />
    <path d="M11 31V16h17" fill="none" stroke="#d83b01" strokeWidth="4" strokeDasharray="4 1.800" />
    <path d="M27.500 19v20M13 34h22" stroke="#9a9aa2" strokeWidth="3.500" />
    <circle cx="38.500" cy="30" r="3.300" fill="none" stroke="#1aa0ea" strokeWidth="2.300" />
    <circle cx="25" cy="43" r="3.300" fill="none" stroke="#1aa0ea" strokeWidth="2.300" />
  </svg>
);

const APPS: { el: React.ReactNode; state?: "active" | "open" }[] = [
  { el: <Windows /> }, { el: <Search /> }, { el: <TaskView /> }, { el: <Copilot /> }, { el: <Studio /> }, { el: <Edge /> },
  { el: <Explorer /> }, { el: <Illustrator /> }, { el: <Chrome />, state: "active" }, { el: <Store /> }, { el: <Outlook /> },
  { el: <Xampp />, state: "open" }, { el: <Wireguard /> }, { el: <Cursor />, state: "open" }, { el: <Notepad />, state: "open" },
  { el: <VsCode />, state: "open" }, { el: <Telegram />, state: "open" }, { el: <Snip /> },
];

function Taskbar() {
  return (
    <footer className="flex h-[72px] shrink-0 items-stretch overflow-hidden border-t-2 border-[#43454b] bg-[linear-gradient(to_right,#1f2323_0%,#1c2423_25%,#162b2c_31%,#172540_38%,#212542_44%,#28233f_52%,#2a1d4a_57%,#2b1360_63%,#2c1160_70%,#331450_76%,#2d1840_83%,#261b32_92%,#231b2c_100%)] text-[17px] text-white">
      <div className="flex w-[179px] shrink-0 items-center pl-[33px]">
        <div className="relative size-[30px] rounded-full bg-[linear-gradient(150deg,#f5b52e,#f26a0a)]">
          <span className="absolute -top-[12px] left-[14px] flex size-6 items-center justify-center rounded-full bg-[#ff99a4] text-[17px] text-[#1c1c1c]">2</span>
        </div>
      </div>
      {APPS.map((a, i) => (
        <div key={i} className="flex w-[66px] shrink-0 flex-col items-center pt-1">
          <div className={"flex h-[60px] w-[60px] flex-col items-center rounded-[6px] " + (a.state === "active" ? "border border-white/10 bg-white/10" : "border border-transparent")}>
            <div className="flex h-[60px] w-12 shrink-0 items-center justify-center">{a.el}</div>
            {a.state === "active" && <span className="-mt-[6px] h-[5px] w-5 shrink-0 rounded-full bg-[#d9a0e8]" />}
            {a.state === "open" && <span className="-mt-[6px] h-[5px] w-[9px] shrink-0 rounded-full bg-[#9a93a3]" />}
          </div>
        </div>
      ))}
      <div className="ml-auto flex items-center pb-0.5 pr-[29px]">
        <svg viewBox="0 0 16 10" className="w-4" fill="none" stroke="#fff" strokeWidth="1.700"><path d="M.8 9L8 1.500 15.200 9" /></svg>
        <svg viewBox="0 0 24 21" className="ml-[27px] mt-1 w-6">
          <path d="M5.500 16.500a5.300 5.300 0 0 1 .5-10.500C7-1 18-1.500 19.500 6.500V16.500z" fill="#b9b2c0" />
          <path d="M5.500 16.500L13 9l5 7.500z" fill="#fff" />
          <circle cx="17" cy="14" r="6.800" fill="#d9232e" />
          <path d="M14.500 11.500l5 5M19.500 11.500l-5 5" stroke="#fff" strokeWidth="1.600" />
        </svg>
        <svg viewBox="0 0 24 20" className="ml-6 w-6" fill="none" stroke="#fff" strokeWidth="1.700">
          <rect x="1" y="1" width="22" height="18" rx="3" /><path d="M1 12.500h22M12 12.500V19" />
        </svg>
        <div className="ml-7 flex w-9 flex-col items-center leading-[22px]"><span>ENG</span><span>IN</span></div>
        <svg viewBox="0 0 24 19" className="ml-[27px] w-6" fill="none" stroke="#fff" strokeWidth="1.800">
          <path d="M1 7.500a15.500 15.500 0 0 1 22 0M4.200 10.800a11 11 0 0 1 15.600 0M7.500 14a6.400 6.400 0 0 1 9 0" /><circle cx="12" cy="17" r="1.600" fill="#fff" stroke="none" />
        </svg>
        <svg viewBox="0 0 24 21" className="ml-3 w-6" fill="none" stroke="#fff" strokeWidth="1.600" strokeLinejoin="round">
          <path d="M1 7.500h3.500L9.500 3v15L4.500 13.500H1zM13 7.500a4.500 4.500 0 0 1 0 6M16 4.500a8.500 8.500 0 0 1 0 12M19.500 1.500a13 13 0 0 1 0 18" />
        </svg>
        <svg viewBox="0 0 24 18" className="ml-3 w-6" fill="none" stroke="#fff" strokeWidth="1.700">
          <rect x="1" y="1" width="19.500" height="16" rx="3" /><rect x="4" y="4" width="11" height="10" rx="1" fill="#fff" stroke="none" /><path d="M22.500 6.500v5" strokeWidth="2.500" />
        </svg>
        <div className="flex w-[118px] flex-col items-end leading-6"><span>06:19</span><span className="tracking-[0.400px]">02-05-2025</span></div>
      </div>
    </footer>
  );
}

export default function App() {
  return (
    <div className="flex h-[1080px] w-[1920px] flex-col overflow-hidden font-['Open_Sans','Noto_Sans',sans-serif]">
      <TabStrip />
      <Toolbar />
      <div className="flex h-[826px] shrink-0 overflow-hidden">
        <Sidebar />
        <Dashboard />
      </div>
      <Taskbar />
    </div>
  );
}
